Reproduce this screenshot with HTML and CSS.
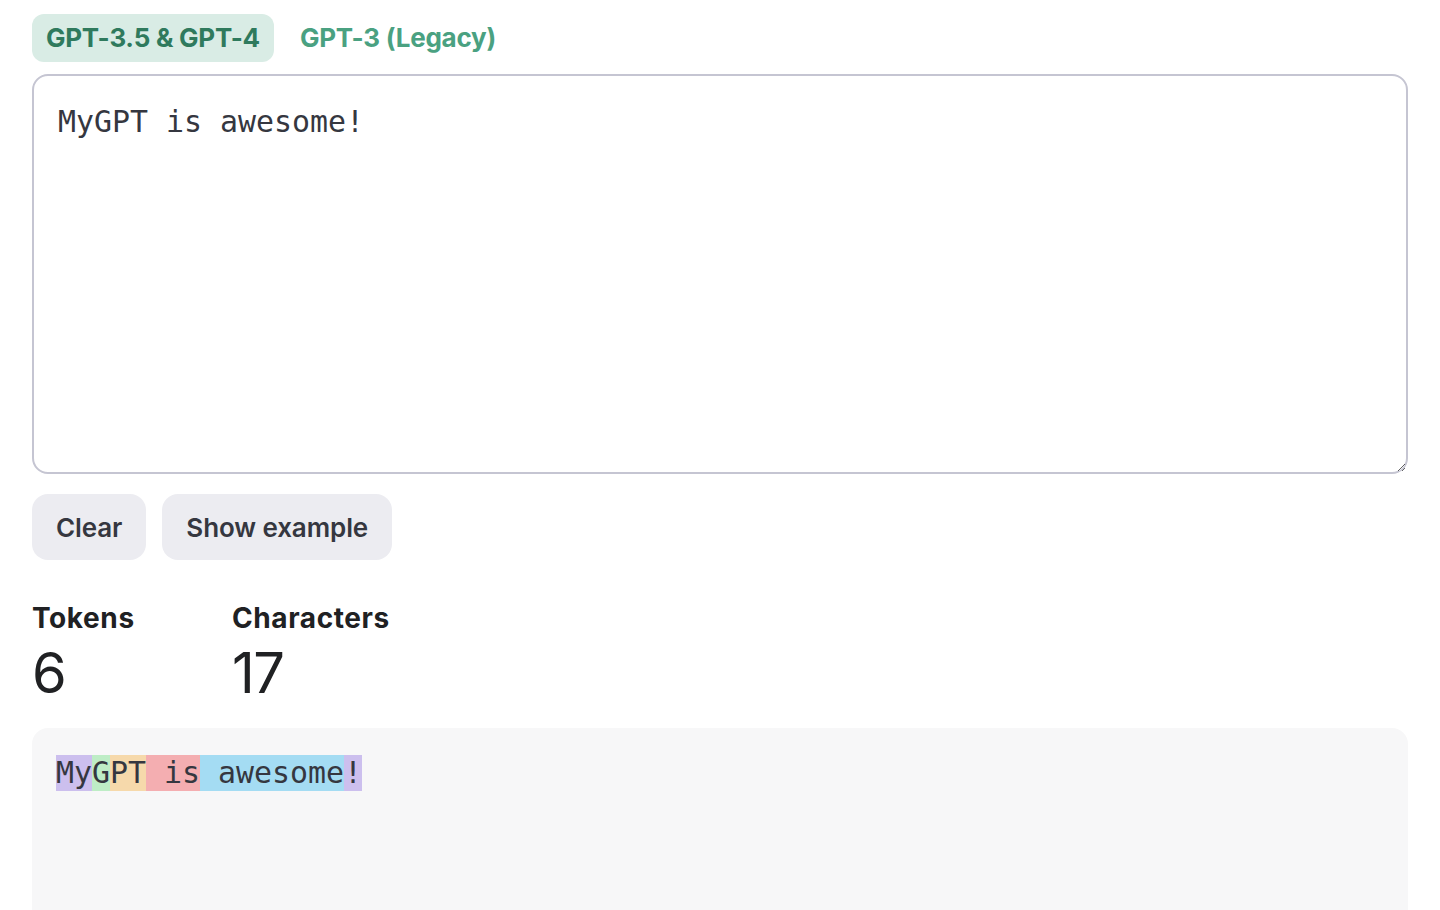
FILE: index.html
```html
<!DOCTYPE html>
<html>
<head>
<meta charset="utf-8">
<link rel="stylesheet" href="styles.css">
</head>
<body>
<div class="page">
  <div class="tabs">
    <div class="tab active">GPT-3.5 &amp; GPT-4</div>
    <div class="tab">GPT-3 (Legacy)</div>
  </div>
  <textarea class="input">MyGPT is awesome!</textarea>
  <div class="buttons">
    <button class="btn">Clear</button>
    <button class="btn">Show example</button>
  </div>
  <div class="stats">
    <div class="stat">
      <div class="stat-label">Tokens</div>
      <div class="stat-value">6</div>
    </div>
    <div class="stat">
      <div class="stat-label">Characters</div>
      <div class="stat-value">17</div>
    </div>
  </div>
  <div class="output"><span class="t t1">My</span><span class="t t2">G</span><span class="t t3">PT</span><span class="t t4"> is</span><span class="t t5"> awesome</span><span class="t t1">!</span></div>
</div>
</body>
</html>
```
FILE: styles.css
```css
* { box-sizing: border-box; }
html, body { margin: 0; padding: 0; background: #fff; }
body {
  font-family: "Inter", "Liberation Sans", sans-serif;
  color: #202123;
  overflow: hidden;
}
.page {
  padding: 14px 32px 0 32px;
}
.tabs {
  display: flex;
  height: 48px;
}
.tab {
  height: 48px;
  padding: 0 14px;
  border-radius: 12px;
  display: flex;
  align-items: center;
  padding-bottom: 2px;
  font-size: 26px;
  font-weight: 700;
  letter-spacing: -0.25px;
  color: #4aa181;
  margin-right: 12px;
}
.tab.active {
  background: #d9ece5;
  color: #2f7a5d;
}
.input {
  display: block;
  margin-top: 12px;
  width: 100%;
  height: 400px;
  border: 2px solid #c5c5d2;
  border-radius: 16px;
  padding: 28px 24px;
  font-family: "DejaVu Sans Mono", "Liberation Mono", monospace;
  font-size: 29.9px;
  line-height: 36px;
  color: #353740;
  resize: vertical;
  outline: none;
}
.buttons {
  display: flex;
  gap: 16px;
  margin-top: 20px;
}
.btn {
  height: 66px;
  padding: 0 24px;
  border: none;
  border-radius: 16px;
  background: #ececf1;
  font-family: "Inter", "Liberation Sans", sans-serif;
  font-size: 26px;
  font-weight: 600;
  letter-spacing: -0.1px;
  color: #353740;
}
.stats {
  display: flex;
  margin-top: 40px;
}
.stat {
  width: 200px;
}
.stat-label {
  font-size: 28px;
  font-weight: 700;
  letter-spacing: 0.6px;
  line-height: 36px;
  color: #202123;
}
.stat-value {
  margin-top: 5px;
  font-size: 56px;
  font-weight: 400;
  letter-spacing: -1.5px;
  line-height: 64px;
  color: #202123;
}
.output {
  margin-top: 23px;
  height: 300px;
  background: #f7f7f8;
  border-radius: 16px;
  padding: 27px 24px;
  font-family: "DejaVu Sans Mono", "Liberation Mono", monospace;
  font-size: 29.9px;
  line-height: 36px;
  color: #353740;
  white-space: pre;
}
.t { display: inline-block; height: 36px; }
.t1 { background: rgba(107, 64, 216, 0.3); }
.t2 { background: rgba(104, 222, 122, 0.4); }
.t3 { background: rgba(244, 172, 54, 0.4); }
.t4 { background: rgba(239, 65, 70, 0.4); }
.t5 { background: rgba(39, 181, 234, 0.4); }
```
